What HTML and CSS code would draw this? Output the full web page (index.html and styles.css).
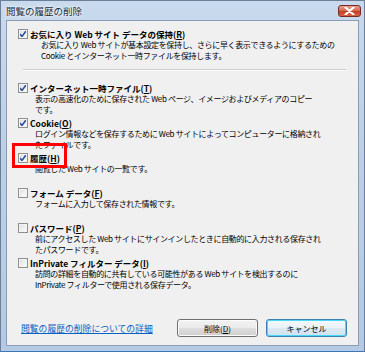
FILE: index.html
```html
<!DOCTYPE html>
<html lang="ja">
<head>
    <meta charset="UTF-8">
    <title>閲覧の履歴の削除</title>
    <link rel="stylesheet" href="styles.css">
</head>
<body>
    <div class="window">
        <div class="titlebar">
            <div class="title">閲覧の履歴の削除</div>
            <div class="close-btn">
                <svg width="11" height="8" viewBox="0 0 11 8">
                    <path d="M1.5 0.5 L9.5 7.5 M9.5 0.5 L1.5 7.5" stroke="#fff" stroke-width="2.2" stroke-linecap="round"/>
                </svg>
            </div>
        </div>

        <div class="client">
            <div class="item first">
                <div class="head">
                    <span class="cb checked"></span>
                    <span class="label">お気に入り Web サイト データの保持(<u>R</u>)</span>
                </div>
                <div class="desc">お気に入り Web サイトが基本設定を保持し、さらに早く表示できるようにするための<br>Cookie とインターネット一時ファイルを保持します。</div>
            </div>

            <div class="separator"></div>

            <div class="item">
                <div class="head">
                    <span class="cb checked"></span>
                    <span class="label">インターネット一時ファイル(<u>T</u>)</span>
                </div>
                <div class="desc">表示の高速化のために保存された Web ページ、イメージおよびメディアのコピー<br>です。</div>
            </div>

            <div class="item">
                <div class="head">
                    <span class="cb checked"></span>
                    <span class="label">Cookie(<u>O</u>)</span>
                </div>
                <div class="desc">ログイン情報などを保存するために Web サイトによってコンピューターに格納され<br>たファイルです。</div>
            </div>

            <div class="item highlighted">
                <div class="head">
                    <span class="cb checked"></span>
                    <span class="label">履歴(<u>H</u>)</span>
                </div>
                <div class="desc">閲覧した Web サイトの一覧です。</div>
                <div class="red-box"></div>
            </div>

            <div class="item">
                <div class="head">
                    <span class="cb"></span>
                    <span class="label">フォーム データ(<u>F</u>)</span>
                </div>
                <div class="desc">フォームに入力して保存された情報です。</div>
            </div>

            <div class="item">
                <div class="head">
                    <span class="cb"></span>
                    <span class="label">パスワード(<u>P</u>)</span>
                </div>
                <div class="desc">前にアクセスした Web サイトにサインインしたときに自動的に入力される保存され<br>たパスワードです。</div>
            </div>

            <div class="item">
                <div class="head">
                    <span class="cb"></span>
                    <span class="label">InPrivate フィルター データ(<u>I</u>)</span>
                </div>
                <div class="desc">訪問の詳細を自動的に共有している可能性がある Web サイトを検出するのに<br>InPrivate フィルターで使用される保存データ。</div>
            </div>

            <div class="footer">
                <a class="more-link" href="#">閲覧の履歴の削除についての詳細</a>
                <div class="buttons">
                    <button class="btn">削除(<u>D</u>)</button>
                    <button class="btn default">キャンセル</button>
                </div>
            </div>
        </div>
    </div>
</body>
</html>
```

FILE: styles.css
```css
* {
    margin: 0;
    padding: 0;
    box-sizing: border-box;
}

body {
    width: 365px;
    height: 352px;
    overflow: hidden;
    font-family: "Noto Sans CJK JP", "Liberation Sans", sans-serif;
    font-size: 8px;
    color: #000;
    background: #fff;
}

.window {
    width: 365px;
    height: 352px;
    display: flex;
    flex-direction: column;
    padding: 0 5px 5px 5px;
    background: linear-gradient(to bottom, #c9daee 0%, #bcd0e8 40%, #b4cae4 100%);
    border: 1px solid #6b7f99;
    border-bottom-color: #3c78b8;
}

.titlebar {
    height: 19px;
    display: flex;
    align-items: center;
    justify-content: space-between;
}

.title {
    font-size: 9.5px;
    color: #1a2a3a;
    text-shadow: 0 0 4px #fff, 0 0 2px #fff;
}

.close-btn {
    width: 23px;
    height: 12px;
    margin-top: 1px;
    margin-right: -2px;
    border: 1px solid #7a2a22;
    border-radius: 3px;
    background: linear-gradient(to bottom, #e8a08f 0%, #d66a52 45%, #c2412a 55%, #d9623f 100%);
    display: flex;
    align-items: center;
    justify-content: center;
}

.client {
    flex: 1;
    display: flex;
    flex-direction: column;
    background: #f0f0f0;
    border: 1px solid #8a9bb2;
    padding: 7px 11px 8px 11px;
}

.item {
    position: relative;
    height: 35px;
}

.item.first {
    height: 41px;
}

.head {
    display: flex;
    align-items: center;
    height: 11px;
    gap: 2px;
}

.label {
    font-weight: bold;
    font-size: 8.5px;
    white-space: nowrap;
}

.desc {
    padding-left: 17px;
    line-height: 11px;
    letter-spacing: -0.35px;
    white-space: nowrap;
}

.item.first .desc {
    padding-left: 23px;
}

.cb {
    width: 10px;
    height: 10px;
    border: 1px solid #8f8f8f;
    background: linear-gradient(135deg, #dcdcdc 0%, #f6f6f6 70%, #ffffff 100%);
    box-shadow: inset 0 0 0 1px #f4f4f4;
    flex-shrink: 0;
}

.cb.checked {
    background: url("data:image/svg+xml;utf8,<svg xmlns='http://www.w3.org/2000/svg' width='8' height='8' viewBox='0 0 8 8'><path d='M1 4 L3 6.5 L7 1' fill='none' stroke='%232a4f9c' stroke-width='1.6'/></svg>") center / 8px 8px no-repeat,
        linear-gradient(135deg, #dcdcdc 0%, #f6f6f6 70%, #ffffff 100%);
}

.separator {
    height: 2px;
    margin: 0 1px 11px 5px;
    border-top: 1px solid #c9ccd0;
    border-bottom: 1px solid #ffffff;
}

.red-box {
    position: absolute;
    left: -6px;
    top: -9px;
    width: 55px;
    height: 25px;
    border: 3px solid #ff0000;
}

.footer {
    margin-top: auto;
    display: flex;
    align-items: center;
    justify-content: space-between;
}

.more-link {
    color: #0a5fc0;
    font-size: 8.8px;
    margin-left: 3px;
}

.buttons {
    display: flex;
    gap: 8px;
}

.btn {
    width: 81px;
    height: 18px;
    font-family: "Noto Sans CJK JP", "Liberation Sans", sans-serif;
    font-size: 8px;
    color: #000;
    border: 1px solid #707070;
    border-radius: 3px;
    background: linear-gradient(to bottom, #f2f2f2 0%, #ebebeb 48%, #dddddd 52%, #cfcfcf 100%);
    box-shadow: inset 0 0 0 1px #fcfcfc;
}

.btn.default {
    border-color: #3c7fb1;
    background: linear-gradient(to bottom, #f4f8fb 0%, #eaf3f9 48%, #dbeaf4 52%, #cfe3f0 100%);
    box-shadow: inset 0 0 0 1px #48d8fb;
}
```
